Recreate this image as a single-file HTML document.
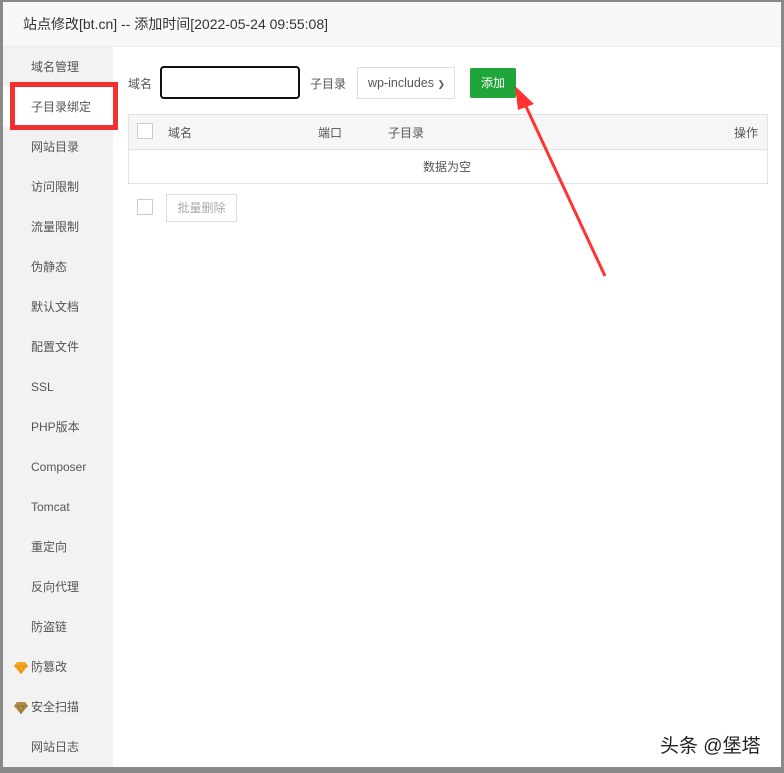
<!DOCTYPE html>
<html><head><meta charset="utf-8"><style>
body{margin:0;width:784px;height:773px;background:#8a8a8a;position:relative;overflow:hidden;font-family:"Liberation Sans","Noto Sans CJK SC",sans-serif;font-size:12px;color:#555}
.dlg{position:absolute;left:3px;top:2px;width:778px;height:765px;background:#fff}
.title{position:absolute;left:0;top:0;width:778px;height:44px;background:#f8f8f8;border-bottom:1px solid #eee;font-size:14px;color:#333;line-height:44px;text-indent:20px}
.side{position:absolute;left:0;top:45px;width:110px;height:720px;background:#f2f2f2}
.side div{position:absolute;left:28px;font-size:12px;color:#555;height:16px;line-height:16px}
.side div.on{background:#fff;left:0;width:110px;text-indent:28px;height:40px;line-height:40px}
.red{position:absolute;left:10px;top:82px;width:98px;height:38px;border:5px solid #f23030}
.abs{position:absolute}
</style></head><body>
<div class="dlg">
<div class="title">站点修改[bt.cn] -- 添加时间[2022-05-24 09:55:08]</div>
<div class="side">
<div style="top:12px">域名管理</div>
<div class="on" style="top:40px">子目录绑定</div>
<div style="top:92px">网站目录</div>
<div style="top:132px">访问限制</div>
<div style="top:172px">流量限制</div>
<div style="top:212px">伪静态</div>
<div style="top:252px">默认文档</div>
<div style="top:292px">配置文件</div>
<div style="top:332px">SSL</div>
<div style="top:372px">PHP版本</div>
<div style="top:412px">Composer</div>
<div style="top:452px">Tomcat</div>
<div style="top:492px">重定向</div>
<div style="top:532px">反向代理</div>
<div style="top:572px">防盗链</div>
<div style="top:612px">防篡改</div>
<div style="top:652px">安全扫描</div>
<div style="top:692px">网站日志</div>
</div>
<svg class="abs" style="left:11px;top:660px" width="14" height="12" viewBox="0 0 14 12"><path d="M3 0h8l3 4-7 8-7-8z" fill="#f5a623"/><path d="M0 4h14M4 4l3 8 3-8" stroke="#e08a00" stroke-width=".8" fill="none"/></svg>
<svg class="abs" style="left:11px;top:700px" width="14" height="12" viewBox="0 0 14 12"><path d="M3 0h8l3 4-7 8-7-8z" fill="#b08a4a"/><path d="M0 4h14M4 4l3 8 3-8" stroke="#8a6a30" stroke-width=".8" fill="none"/></svg>
</div>
<div class="red"></div>
<div class="abs" style="left:128px;top:75px;color:#555">域名</div>
<div class="abs" style="left:160px;top:66px;width:136px;height:29px;border:2px solid #111;border-radius:4px;background:#fff"></div>
<div class="abs" style="left:310px;top:75px;color:#555">子目录</div>
<div class="abs" style="left:357px;top:67px;width:96px;height:30px;border:1px solid #ddd;background:#fff;line-height:30px;text-indent:10px;color:#555;font-size:12.5px">wp-includes <span style="font-size:9px">&#10095;</span></div>
<div class="abs" style="left:470px;top:68px;width:46px;height:30px;background:#20a53a;border-radius:2px;color:#fff;text-align:center;line-height:30px">添加</div>
<div class="abs" style="left:128px;top:114px;width:638px;height:68px;border:1px solid #e2e2e2"></div>
<div class="abs" style="left:129px;top:115px;width:638px;height:34px;background:#f6f6f6;border-bottom:1px solid #e2e2e2"></div>
<div class="abs" style="left:137px;top:123px;width:14px;height:14px;border:1px solid #ccc;background:#fff"></div>
<div class="abs" style="left:168px;top:124px">域名</div>
<div class="abs" style="left:318px;top:124px">端口</div>
<div class="abs" style="left:388px;top:124px">子目录</div>
<div class="abs" style="left:734px;top:124px">操作</div>
<div class="abs" style="left:423px;top:158px">数据为空</div>
<div class="abs" style="left:137px;top:199px;width:14px;height:14px;border:1px solid #ccc"></div>
<div class="abs" style="left:166px;top:194px;width:69px;height:26px;border:1px solid #ddd;color:#aaa;line-height:26px;text-align:center">批量删除</div>
<svg class="abs" style="left:0;top:0" width="784" height="773"><path d="M605 276 L523 100" stroke="#f33" stroke-width="3"/><path d="M515 86 L534 104 L518 110 Z" fill="#f33"/></svg>
<div class="abs" style="left:660px;top:731px;font-size:19px;color:#222;text-shadow:0 0 2px #fff">头条 @堡塔</div>
</body></html>
